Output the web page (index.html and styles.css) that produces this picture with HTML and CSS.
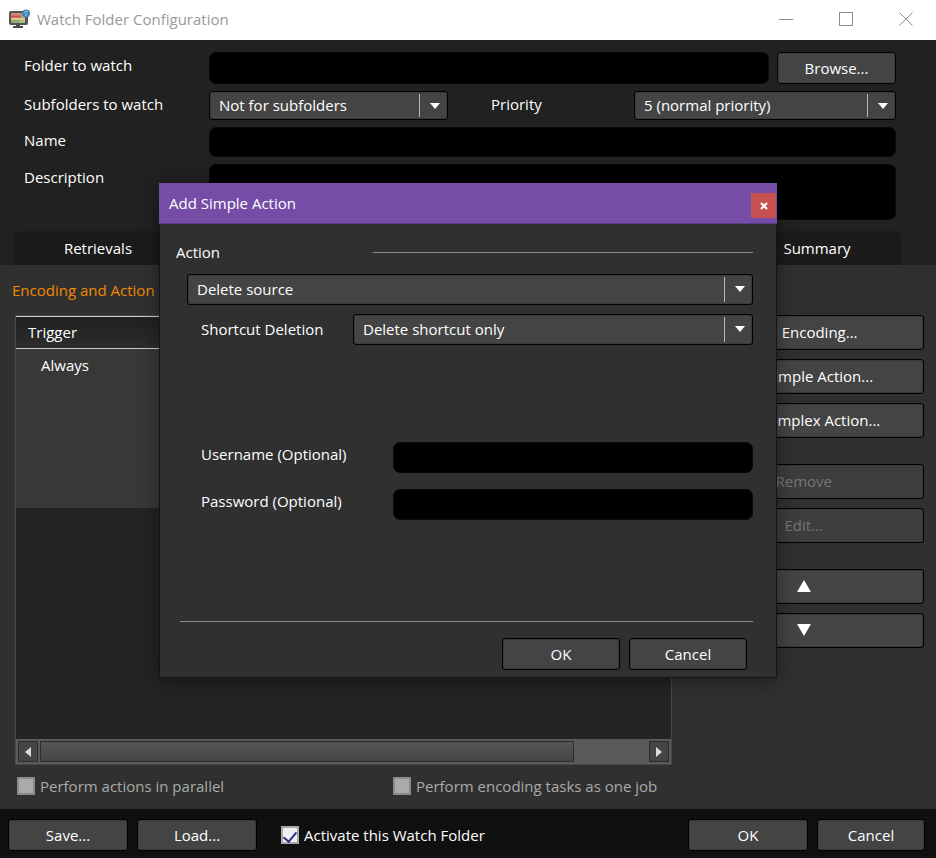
FILE: index.html
```html
<!DOCTYPE html>
<html lang="en">
<head>
<meta charset="utf-8">
<title>Watch Folder Configuration</title>
<link rel="stylesheet" href="styles.css">
</head>
<body>
<div class="window">
  <header class="titlebar">
    <svg class="app-icon" width="23" height="20" viewBox="0 0 23 20" aria-hidden="true">
      <rect x="1" y="2" width="19" height="14" rx="2" fill="#505254"/>
      <rect x="3" y="4" width="14" height="10" fill="#b3a58c"/>
      <path d="M3 5h11" stroke="#d08a72" stroke-width="2"/>
      <path d="M3 7.500h10" stroke="#cf4f48" stroke-width="2"/>
      <path d="M3 10h14" stroke="#dcc489" stroke-width="2"/>
      <path d="M3 12.500h8" stroke="#7fae5c" stroke-width="2"/>
      <path d="M11 12.500h6" stroke="#a5c987" stroke-width="2"/>
      <path d="M8 16h4v1h3v2H5v-2h3z" fill="#4a4c4e"/>
      <circle cx="18" cy="4.500" r="4" fill="#3f86b8"/>
      <path d="M16 4a2.500 2.500 0 0 1 4-1M18 4v3" stroke="#a9d3ee" fill="none"/>
    </svg>
    <h1 class="title">Watch Folder Configuration</h1>
    <div class="caption-buttons">
      <button type="button" aria-label="Minimize"><svg width="14" height="14" viewBox="0 0 14 14"><path d="M0 7.500h14" stroke="#8c8c8c"/></svg></button>
      <button type="button" aria-label="Maximize"><svg width="14" height="14" viewBox="0 0 14 14"><rect x=".5" y=".5" width="13" height="13" fill="none" stroke="#8c8c8c"/></svg></button>
      <button type="button" aria-label="Close"><svg width="14" height="14" viewBox="0 0 14 14"><path d="M.5.5l13 13M13.500.5l-13 13" stroke="#8c8c8c"/></svg></button>
    </div>
  </header>

  <section class="settings">
    <div class="form">
      <label for="folder">Folder to watch</label>
      <div class="field folder-field">
        <input class="text" id="folder" type="text">
        <button class="btn browse" type="button">Browse...</button>
      </div>
      <label for="subfolders">Subfolders to watch</label>
      <div class="field split-field">
        <div class="combo"><select id="subfolders"><option>Not for subfolders</option></select></div>
        <label for="priority">Priority</label>
        <div class="combo"><select id="priority"><option>5 (normal priority)</option></select></div>
      </div>
      <label for="name">Name</label>
      <input class="text" id="name" type="text">
      <label for="description">Description</label>
      <textarea class="text" id="description"></textarea>
    </div>
    <nav class="tabs">
      <button type="button">Retrievals</button>
      <button type="button">Summary</button>
    </nav>
  </section>

  <main class="content">
    <h2 class="heading">Encoding and Action</h2>
    <div class="work">
      <div class="list">
        <table>
          <thead><tr><th>Trigger</th></tr></thead>
          <tbody><tr><td>Always</td></tr></tbody>
        </table>
        <div class="scrollbar">
          <button type="button" aria-label="Scroll left"><svg width="6" height="12" viewBox="0 0 6 12"><path d="M6 1v10L0 6z" fill="#ddd"/></svg></button>
          <div class="track"><div class="thumb"></div></div>
          <button type="button" aria-label="Scroll right"><svg width="6" height="12" viewBox="0 0 6 12"><path d="M0 1v10l6-5z" fill="#ddd"/></svg></button>
        </div>
      </div>
      <div class="actions">
        <div class="group">
          <button class="btn" type="button">Add Encoding...</button>
          <button class="btn" type="button">Add Simple Action...</button>
          <button class="btn" type="button">Add Complex Action...</button>
        </div>
        <div class="group">
          <button class="btn" type="button" disabled>Remove</button>
          <button class="btn" type="button" disabled>Edit...</button>
        </div>
        <div class="group">
          <button class="btn" type="button" aria-label="Move up"><svg width="14" height="12" viewBox="0 0 14 12"><path d="M7 0l7 12H0z" fill="#fff"/></svg></button>
          <button class="btn" type="button" aria-label="Move down"><svg width="14" height="12" viewBox="0 0 14 12"><path d="M0 0h14L7 12z" fill="#fff"/></svg></button>
        </div>
      </div>
    </div>
    <div class="options">
      <label class="check"><input type="checkbox" disabled>Perform actions in parallel</label>
      <label class="check"><input type="checkbox" disabled>Perform encoding tasks as one job</label>
    </div>
  </main>

  <footer class="footer">
    <button class="btn" type="button">Save...</button>
    <button class="btn" type="button">Load...</button>
    <label class="check activate"><input type="checkbox" checked>Activate this Watch Folder</label>
    <button class="btn" type="button">OK</button>
    <button class="btn cancel" type="button">Cancel</button>
  </footer>

  <div class="dialog" role="dialog" aria-labelledby="dialog-title">
    <div class="dialog-bar">
      <h2 id="dialog-title">Add Simple Action</h2>
      <button class="dialog-close" type="button" aria-label="Close"><svg width="8" height="8" viewBox="0 0 8 8"><path d="M1 1l6 6M7 1L1 7" stroke="#fff" stroke-width="2"/></svg></button>
    </div>
    <div class="dialog-body">
      <div class="legend"><label for="action">Action</label><span class="rule"></span></div>
      <div class="dialog-fields">
        <div class="combo tall"><select id="action"><option>Delete source</option></select></div>
        <div class="row shortcut">
          <label for="shortcut">Shortcut Deletion</label>
          <div class="combo tall"><select id="shortcut"><option>Delete shortcut only</option></select></div>
        </div>
        <div class="row login">
          <label for="username">Username (Optional)</label>
          <input class="text" id="username" type="text">
          <label for="password">Password (Optional)</label>
          <input class="text" id="password" type="password">
        </div>
      </div>
      <div class="dialog-buttons">
        <button class="btn" type="button">OK</button>
        <button class="btn" type="button">Cancel</button>
      </div>
    </div>
  </div>
</div>
</body>
</html>
```
FILE: styles.css
```css
* { box-sizing: border-box; }

body {
  margin: 0;
  background: #303030;
  color: #fff;
  font: 15px/20px "Open Sans", "Noto Sans", sans-serif;
}

h1, h2 { margin: 0; font-size: 15px; font-weight: 400; }

button, input, select, textarea { font: inherit; color: inherit; margin: 0; }
button { padding: 0; border: 0; background: none; }
svg { display: block; }

.window {
  position: relative;
  display: flex;
  flex-direction: column;
  min-height: 100vh;
}

.titlebar {
  display: flex;
  align-items: center;
  height: 40px;
  padding: 0 0 2px 8px;
  gap: 6px;
  background: #fff;
  color: #999;
}
.title { flex: 1; }
.caption-buttons { display: flex; }
.caption-buttons button { display: grid; place-items: center; width: 60px; height: 38px; }

.btn {
  display: grid;
  place-items: center;
  height: 32px;
  padding-bottom: 1px;
  border: 1px solid #000;
  border-radius: 3px;
  background: #444;
  box-shadow: inset 0 0 0 1px #3a3a3a;
}
.btn:disabled { background: #3d3d3d; color: #747474; }

.text {
  display: block;
  width: 100%;
  min-width: 0;
  height: 100%;
  padding: 4px 8px;
  border: 1px solid #0a0a0a;
  border-radius: 7px;
  background: #000;
  resize: none;
}

.combo { position: relative; height: 29px; }
.combo.tall { height: 31px; }
.combo select {
  display: block;
  width: 100%;
  height: 100%;
  padding: 0 36px 1px 9px;
  border: 1px solid #000;
  border-radius: 3px;
  background: #444;
  box-shadow: inset 0 0 0 1px #3a3a3a;
  appearance: none;
}
.combo::before {
  content: "";
  position: absolute;
  top: 3px;
  bottom: 3px;
  right: 28px;
  width: 1px;
  background: #b5b5b5;
}
.combo::after {
  content: "";
  position: absolute;
  top: 12px;
  right: 8px;
  border: 5px solid transparent;
  border-top: 6px solid #fff;
  border-bottom: 0;
  pointer-events: none;
}

.settings { background: #212121; padding-top: 12px; }
.form {
  display: grid;
  grid-template-columns: 185px 1fr;
  grid-template-rows: 32px 29px 30px 56px;
  row-gap: 7px;
  padding: 0 40px 0 24px;
}
.form label { line-height: 26px; }
.field { display: flex; }
.folder-field { gap: 8px; }
.browse { flex: 0 0 119px; }
.split-field .combo { flex: 239 1 0; }
.split-field label { flex: 0 0 186px; padding-left: 43px; }
.split-field .combo:last-child { flex-grow: 262; }

.tabs {
  display: flex;
  justify-content: space-between;
  margin: 11px 35px 0 14px;
  border-radius: 6px 6px 0 0;
  background: #1b1b1b;
}
.tabs button { width: 168px; height: 34px; }

.content { flex: 1; display: flex; flex-direction: column; padding: 15px 12px 0; }
.heading { color: #f08a00; }
.work { flex: 1; display: flex; gap: 12px; margin-top: 15px; }

.list {
  flex: 656 1 0;
  display: flex;
  flex-direction: column;
  justify-content: space-between;
  margin-left: 3px;
  border: 1px solid #484848;
  background: #242424;
}
table { width: 100%; border-collapse: collapse; }
th {
  height: 32px;
  padding: 0 12px 1px;
  border-top: 1px solid #ccc;
  border-bottom: 1px solid #ccc;
  background: linear-gradient(#202020, #2d2d2d);
  font-weight: 400;
  text-align: left;
}
td { height: 159px; padding: 6px 25px; background: #383838; vertical-align: top; }

.scrollbar { display: flex; height: 25px; padding: 2px; background: #5a5a5a; }
.scrollbar button {
  display: grid;
  place-items: center;
  width: 20px;
  border: 1px solid #2c2c2c;
  background: #444;
}
.track { flex: 1; padding: 0 2px; }
.thumb { width: 88%; height: 100%; border: 1px solid #2c2c2c; background: linear-gradient(#545454, #464646); }

.actions { flex: 241 1 0; display: flex; flex-direction: column; gap: 26px; }
.group { display: flex; flex-direction: column; gap: 9px; }
.group .btn { height: 35px; }

.options { display: grid; grid-template-columns: 376px 1fr; height: 44px; padding: 0 0 3px 5px; color: #aaa; }
.check { display: flex; align-items: center; gap: 5px; }
.check input {
  width: 18px;
  height: 18px;
  border: 2px solid #8a8a8a;
  background: #aaa;
  appearance: none;
}
.check input:checked {
  border: 2px solid #a8a8a8;
  background: #eef0f6;
  display: grid;
  place-items: center;
}
.check input:checked::before {
  content: "";
  width: 6px;
  height: 11px;
  border: solid #2f317d;
  border-width: 0 2px 2px 0;
  transform: rotate(40deg);
}

.footer {
  display: flex;
  align-items: center;
  gap: 9px;
  height: 49px;
  padding: 3px 11px 0 8px;
  background: #101010;
}
.footer .btn { width: 120px; }
.footer .cancel { width: 108px; }
.activate { flex: 1; padding-left: 15px; }

.dialog {
  position: absolute;
  top: 183px;
  left: 0;
  right: 0;
  width: 618px;
  margin: 0 auto;
  border: 1px solid #151515;
  background: #303030;
  box-shadow: 0 4px 18px rgba(0, 0, 0, .4);
}
.dialog-bar {
  display: flex;
  align-items: center;
  justify-content: space-between;
  height: 41px;
  margin: -1px -1px 0;
  padding: 0 1px 0 10px;
  background: #754da6;
  border-bottom: 1px solid #5c3c86;
}
.dialog-close { display: grid; place-items: center; width: 25px; height: 25px; margin-top: 5px; background: #c75050; }
.dialog-body { padding: 18px 23px 7px 16px; }
.legend { display: flex; align-items: center; justify-content: space-between; }
.rule { width: 380px; height: 1px; background: #8a8a8a; }
.dialog-fields { padding: 12px 0 0 11px; }
.row { display: grid; align-items: center; padding-left: 14px; }
.shortcut { grid-template-columns: 152px 1fr; margin-top: 9px; }
.login { grid-template-columns: 192px 1fr; grid-auto-rows: 31px; row-gap: 16px; margin-top: 97px; }
.shortcut label { padding-bottom: 1px; }
.login label { padding-bottom: 7px; }
.dialog-buttons {
  display: flex;
  justify-content: flex-end;
  gap: 9px;
  margin: 101px 0 0 4px;
  padding: 16px 6px 0 0;
  border-top: 1px solid #8a8a8a;
}
.dialog-buttons .btn { width: 118px; height: 32px; }
```
